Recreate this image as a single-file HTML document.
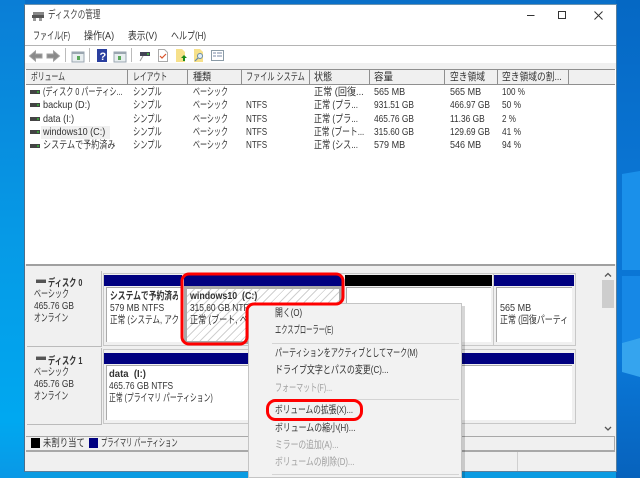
<!DOCTYPE html>
<html lang="ja"><head><meta charset="utf-8">
<style>
html,body{margin:0;padding:0}
body{width:640px;height:478px;overflow:hidden;position:relative;background:#0a9be2;font-family:"Liberation Sans","Noto Sans CJK JP",sans-serif;font-size:10.5px;color:#333;filter:blur(.3px)}
.a{position:absolute}
.t{position:absolute;white-space:nowrap;line-height:13px;height:13px;transform-origin:0 0;transform:scaleX(calc(var(--s,1)*.905))}
.k{--s:.74}
.n{--s:.88}
.d{color:#a0a0a0}
.clip{overflow:hidden}
.p{box-sizing:border-box;background:#fff;border-left:1px solid #aaa;border-top:1px solid #aaa}
svg{position:absolute;left:0;top:0}
</style></head><body>
<div class="a" style="left:0;top:0;width:640px;height:478px;background:linear-gradient(180deg,#0a6fc8 0,#0a7fd6 12%,#0a9be2 100%)"></div>
<div class="a" style="left:616px;top:0;width:24px;height:478px;background:linear-gradient(180deg,#0568c4 0,#0a74d2 35%,#0a78d8 75%,#0762bc 100%)"></div>
<div class="a" style="left:0;top:0;width:25px;height:478px;background:linear-gradient(180deg,#0a7ed6 0,#069ae6 50%,#00a8f0 88%,#0a98e6 100%)"></div>
<svg width="640" height="478" viewBox="0 0 640 478">
<polygon points="622,174 640,171 640,270 622,270" fill="#1a90ea"/>
<polygon points="622,276 640,276 640,338 622,343" fill="#1688e6"/>
<polygon points="622,343 640,338 640,377 622,372" fill="#35a4ee"/>
</svg>
<!-- window -->
<div class="a" style="left:24px;top:4px;width:593px;height:468px;background:#fff;border-right:1px solid #5a7f9c;border-left:1px solid #4a6f8c;border-top:1px solid #6a93b0;border-bottom:1px solid #5a7f9c;box-sizing:border-box"></div>
<!-- title -->
<div class="t" style="left:48px;top:9px;font-size:11px;color:#444;--s:.76">ディスクの管理</div>
<svg width="640" height="60" viewBox="0 0 640 60">
<rect x="32" y="15" width="12" height="3" fill="#555"/>
<rect x="33" y="12" width="11" height="3" fill="#888"/>
<rect x="33" y="18" width="3" height="3" fill="#999"/>
<rect x="39" y="18" width="3" height="3" fill="#999"/>
<path d="M527 15.5h7.5" stroke="#333" stroke-width="1"/>
<rect x="558.5" y="11.5" width="7" height="7" fill="none" stroke="#333" stroke-width="1"/>
<path d="M594.5 11.5l8 8M602.5 11.5l-8 8" stroke="#333" stroke-width="1"/>
</svg>
<!-- menu -->
<div class="t k" style="left:33px;top:30px">ファイル(F)</div>
<div class="t" style="left:84px;top:30px;--s:.95">操作(A)</div>
<div class="t" style="left:128px;top:30px;--s:.92">表示(V)</div>
<div class="t" style="left:171px;top:30px;--s:.84">ヘルプ(H)</div>
<div class="a" style="left:25px;top:45px;width:591px;height:1px;background:#b4b4b4"></div>
<!-- toolbar -->
<svg width="640" height="70" viewBox="0 0 640 70">
<path d="M29.500 56l6-5v3h6.500v4h-6.500v3z" fill="#8a8a8a" stroke="#a0a0a0" stroke-width="1"/>
<path d="M59.500 56l-6-5v3h-6.500v4h6.500v3z" fill="#8a8a8a" stroke="#a0a0a0" stroke-width="1"/>
<rect x="65" y="48" width="1" height="14" fill="#bbb"/>
<rect x="72" y="52" width="12" height="10" fill="#e8eef0" stroke="#9aa6b0"/>
<rect x="72" y="52" width="12" height="2" fill="#9aa6b0"/>
<rect x="77" y="56" width="3" height="4" fill="#5aa85a"/>
<rect x="89" y="48" width="1" height="14" fill="#bbb"/>
<rect x="97" y="49" width="10" height="13" fill="#2a3f9f"/>
<text x="99.5" y="60" font-family="Liberation Sans" font-size="11" font-weight="bold" fill="#fff">?</text>
<rect x="114" y="52" width="12" height="10" fill="#e8eef0" stroke="#9aa6b0"/>
<rect x="114" y="52" width="12" height="2" fill="#9aa6b0"/>
<rect x="118" y="56" width="3" height="4" fill="#5aa85a"/>
<rect x="131" y="48" width="1" height="14" fill="#bbb"/>
<path d="M140 61l3-5" stroke="#999" stroke-width="1"/>
<rect x="140" y="52" width="10" height="4" fill="#445"/>
<rect x="147" y="53" width="2" height="2" fill="#4a4"/>
<path d="M158.500 49.500h6l3 3v9h-9z" fill="#fff" stroke="#aaa"/>
<path d="M160 56l2 2 4-4" fill="none" stroke="#d9532a" stroke-width="1.200"/>
<path d="M176 49h6l3 3v10h-9z" fill="#f6e08a"/>
<path d="M183 61v-3h-2l3-3 3 3h-2v3z" fill="#1a8a1a"/>
<path d="M194 49h6l3 3v10h-9z" fill="#f6e08a"/>
<circle cx="200" cy="56" r="2.500" fill="#dfeef8" stroke="#6a8aa6"/>
<path d="M198 58l-3 3" stroke="#6a8aa6" stroke-width="1.200"/>
<rect x="211.500" y="50.500" width="12" height="10" fill="#fff" stroke="#8a9aa6"/>
<path d="M213 53h3M213 56h3M217 53h5M217 56h5" stroke="#7a8aa6"/>
</svg>
<div class="a" style="left:25px;top:63px;width:591px;height:6px;background:#f0f0f0"></div>
<div class="a" style="left:26px;top:69px;width:589px;height:1px;background:#8f8f8f"></div>
<!-- headers -->
<div class="a" style="left:26px;top:70px;width:589px;height:15px;background:#f0f0f0;border-bottom:1px solid #8f8f8f;box-sizing:border-box"></div>
<div class="a" style="left:127px;top:70px;width:1px;height:14px;background:#8f8f8f"></div>
<div class="a" style="left:187px;top:70px;width:1px;height:14px;background:#8f8f8f"></div>
<div class="a" style="left:241px;top:70px;width:1px;height:14px;background:#8f8f8f"></div>
<div class="a" style="left:309px;top:70px;width:1px;height:14px;background:#8f8f8f"></div>
<div class="a" style="left:369px;top:70px;width:1px;height:14px;background:#8f8f8f"></div>
<div class="a" style="left:444px;top:70px;width:1px;height:14px;background:#8f8f8f"></div>
<div class="a" style="left:497px;top:70px;width:1px;height:14px;background:#8f8f8f"></div>
<div class="a" style="left:568px;top:70px;width:1px;height:14px;background:#8f8f8f"></div>
<div class="t" style="left:31px;top:71px;--s:.72">ボリューム</div>
<div class="t" style="left:133px;top:71px;--s:.72">レイアウト</div>
<div class="t" style="left:193px;top:71px;--s:.95">種類</div>
<div class="t" style="left:246px;top:71px;--s:.75">ファイル システム</div>
<div class="t" style="left:314px;top:71px;--s:.95">状態</div>
<div class="t" style="left:374px;top:71px">容量</div>
<div class="t" style="left:450px;top:71px;--s:.92">空き領域</div>
<div class="t" style="left:502px;top:71px;--s:.92">空き領域の割...</div>
<!-- row icons -->
<svg width="640" height="160" viewBox="0 0 640 160">
<g fill="#444"><rect x="30" y="90" width="10" height="4"/><rect x="30" y="103" width="10" height="4"/><rect x="30" y="117" width="10" height="4"/><rect x="30" y="130" width="10" height="4"/><rect x="30" y="144" width="10" height="4"/></g>
<g fill="#3a9a3a"><rect x="37" y="91" width="2" height="2"/><rect x="37" y="104" width="2" height="2"/><rect x="37" y="118" width="2" height="2"/><rect x="37" y="131" width="2" height="2"/><rect x="37" y="145" width="2" height="2"/></g>
</svg>
<div class="a" style="left:41px;top:126px;width:69px;height:13px;background:#f0f0f0"></div>
<!-- rows -->
<div class="t" style="left:43px;top:86px;--s:.75">(ディスク 0 パーティシ...</div>
<div class="t" style="left:43px;top:99px;--s:.96">backup (D:)</div>
<div class="t" style="left:43px;top:113px;--s:.95">data (I:)</div>
<div class="t" style="left:43px;top:126px;--s:.95">windows10 (C:)</div>
<div class="t" style="left:43px;top:139px;--s:.85">システムで予約済み</div>
<div class="t" style="left:133px;top:86px;--s:.76">シンプル</div><div class="t" style="left:133px;top:99px;--s:.76">シンプル</div><div class="t" style="left:133px;top:113px;--s:.76">シンプル</div><div class="t" style="left:133px;top:126px;--s:.76">シンプル</div><div class="t" style="left:133px;top:139px;--s:.76">シンプル</div>
<div class="t k" style="left:193px;top:86px">ベーシック</div><div class="t k" style="left:193px;top:99px">ベーシック</div><div class="t k" style="left:193px;top:113px">ベーシック</div><div class="t k" style="left:193px;top:126px">ベーシック</div><div class="t k" style="left:193px;top:139px">ベーシック</div>
<div class="t" style="left:246px;top:99px;--s:.85">NTFS</div><div class="t" style="left:246px;top:113px;--s:.85">NTFS</div><div class="t" style="left:246px;top:126px;--s:.85">NTFS</div><div class="t" style="left:246px;top:139px;--s:.85">NTFS</div>
<div class="t" style="left:314px;top:86px;--s:.96">正常 (回復...</div><div class="t" style="left:314px;top:99px;--s:.85">正常 (プラ...</div><div class="t" style="left:314px;top:113px;--s:.85">正常 (プラ...</div><div class="t" style="left:314px;top:126px;--s:.82">正常 (ブート...</div><div class="t" style="left:314px;top:139px;--s:.85">正常 (シス...</div>
<div class="t" style="left:374px;top:86px;--s:.95">565 MB</div><div class="t n" style="left:374px;top:99px">931.51 GB</div><div class="t n" style="left:374px;top:113px">465.76 GB</div><div class="t n" style="left:374px;top:126px">315.60 GB</div><div class="t" style="left:374px;top:139px;--s:.95">579 MB</div>
<div class="t" style="left:450px;top:86px;--s:.95">565 MB</div><div class="t n" style="left:450px;top:99px">466.97 GB</div><div class="t n" style="left:450px;top:113px">11.36 GB</div><div class="t n" style="left:450px;top:126px">129.69 GB</div><div class="t" style="left:450px;top:139px;--s:.95">546 MB</div>
<div class="t" style="left:502px;top:86px;--s:.85">100 %</div><div class="t n" style="left:502px;top:99px">50 %</div><div class="t" style="left:502px;top:113px;--s:.85">2 %</div><div class="t n" style="left:502px;top:126px">41 %</div><div class="t n" style="left:502px;top:139px">94 %</div>
<!-- lower pane -->
<div class="a" style="left:25px;top:264px;width:591px;height:207px;background:#f0f0f0"></div>
<div class="a" style="left:26px;top:264px;width:589px;height:2px;background:#a0a0a0"></div>
<div class="a" style="left:27px;top:271px;width:75px;height:76px;background:#f0f0f0;border-right:1px solid #bbb;border-bottom:1px solid #bbb;box-sizing:border-box"></div>
<div class="a" style="left:27px;top:348px;width:75px;height:77px;background:#f0f0f0;border-right:1px solid #bbb;border-bottom:1px solid #bbb;box-sizing:border-box"></div>
<div class="a" style="left:103px;top:273px;width:473px;height:73px;box-sizing:border-box;border:1px solid #c8c8c8"></div>
<div class="a" style="left:103px;top:349px;width:473px;height:75px;box-sizing:border-box;border:1px solid #c8c8c8"></div>
<svg width="640" height="478" viewBox="0 0 640 478">
<rect x="36" y="280" width="10" height="3" fill="#555"/><rect x="36" y="279" width="10" height="1" fill="#aaa"/>
<rect x="36" y="357" width="10" height="3" fill="#555"/><rect x="36" y="356" width="10" height="1" fill="#aaa"/>
</svg>
<div class="t" style="left:48px;top:277px;font-weight:bold;--s:.76">ディスク 0</div>
<div class="t k" style="left:34px;top:288px">ベーシック</div>
<div class="t n" style="left:34px;top:300px">465.76 GB</div>
<div class="t" style="left:34px;top:312px;--s:.72">オンライン</div>
<div class="t" style="left:48px;top:355px;font-weight:bold;--s:.76">ディスク 1</div>
<div class="t k" style="left:34px;top:366px">ベーシック</div>
<div class="t n" style="left:34px;top:378px">465.76 GB</div>
<div class="t" style="left:34px;top:390px;--s:.72">オンライン</div>
<!-- disk 0 partitions -->
<div class="a" style="left:104px;top:275px;width:78px;height:11px;background:#000080"></div>
<div class="a" style="left:184px;top:275px;width:158px;height:11px;background:#000080"></div>
<div class="a" style="left:345px;top:275px;width:147px;height:11px;background:#000"></div>
<div class="a" style="left:494px;top:275px;width:80px;height:11px;background:#000080"></div>
<div class="a" style="left:493px;top:273px;width:1px;height:73px;background:#c8c8c8"></div>
<div class="a p" style="left:106px;top:287px;width:75px;height:55px"></div>
<div class="a" style="left:184px;top:286px;width:158px;height:58px;box-sizing:border-box;border:3px solid #a8a8a8;background:repeating-linear-gradient(135deg,#fff 0,#fff 4.800px,#d0d0d0 4.800px,#d0d0d0 5.800px)"></div>
<div class="a p" style="left:346px;top:287px;width:145px;height:55px"></div>
<div class="a p" style="left:496px;top:287px;width:76px;height:55px"></div>
<div class="a clip" style="left:110px;top:290px;width:68px;height:50px">
<div class="t" style="left:0;top:0;font-weight:bold;--s:.82">システムで予約済み</div>
<div class="t" style="left:0;top:12px;--s:.9">579 MB NTFS</div>
<div class="t" style="left:0;top:24px;--s:.8">正常 (システム, アクティブ</div>
</div>
<div class="t" style="left:190px;top:290px;font-weight:bold;--s:.93">windows10&nbsp; (C:)</div>
<div class="t n" style="left:190px;top:302px">315.60 GB NTFS</div>
<div class="t" style="left:190px;top:314px;--s:.85">正常 (ブート, ペ</div>
<div class="t" style="left:500px;top:302px;--s:.95">565 MB</div>
<div class="t" style="left:500px;top:314px;--s:.84">正常 (回復パーティ</div>
<!-- disk 1 -->
<div class="a" style="left:104px;top:353px;width:470px;height:11px;background:#000080"></div>
<div class="a p" style="left:106px;top:365px;width:466px;height:55px"></div>
<div class="t" style="left:109px;top:368px;font-weight:bold">data&nbsp; (I:)</div>
<div class="t n" style="left:109px;top:380px">465.76 GB NTFS</div>
<div class="t" style="left:109px;top:392px;--s:.72">正常 (プライマリ パーティション)</div>
<!-- scrollbar -->
<div class="a" style="left:602px;top:280px;width:12px;height:28px;background:#cdcdcd"></div>
<svg width="640" height="478" viewBox="0 0 640 478"><path d="M605 276.500l3-3 3 3M605 427l3 3 3-3" fill="none" stroke="#555" stroke-width="1.300"/></svg>
<!-- legend -->
<div class="a" style="left:26px;top:436px;width:589px;height:1px;background:#a8a8a8"></div>
<div class="a" style="left:26px;top:450px;width:589px;height:2px;background:#a8a8a8"></div>
<div class="a" style="left:614px;top:436px;width:1px;height:15px;background:#a8a8a8"></div>
<div class="a" style="left:31px;top:438px;width:9px;height:10px;background:#000"></div>
<div class="t" style="left:43px;top:437px;--s:.88">未割り当て</div>
<div class="a" style="left:89px;top:438px;width:9px;height:10px;background:#000080"></div>
<div class="t" style="left:101px;top:437px;--s:.66">プライマリ パーティション</div>
<div class="a" style="left:517px;top:452px;width:1px;height:19px;background:#d0d0d0"></div>
<!-- context menu -->
<div class="a" style="left:251px;top:306px;width:214px;height:172px;background:#000;opacity:.16"></div>
<div class="a" style="left:248px;top:303px;width:214px;height:175px;background:#f2f2f2;border:1px solid #c4c4c4;box-sizing:border-box"></div>
<div class="t" style="left:275px;top:307px;--s:.83">開く(O)</div>
<div class="t" style="left:275px;top:324px;--s:.66">エクスプローラー(E)</div>
<div class="a" style="left:272px;top:343px;width:187px;height:1px;background:#d4d4d4"></div>
<div class="t" style="left:275px;top:347px;--s:.74">パーティションをアクティブとしてマーク(M)</div>
<div class="t" style="left:275px;top:364px;--s:.84">ドライブ文字とパスの変更(C)...</div>
<div class="t d k" style="left:275px;top:382px">フォーマット(F)...</div>
<div class="a" style="left:272px;top:399px;width:187px;height:1px;background:#d4d4d4"></div>
<div class="t" style="left:275px;top:404px;--s:.81">ボリュームの拡張(X)...</div>
<div class="t" style="left:275px;top:422px;--s:.83">ボリュームの縮小(H)...</div>
<div class="t d" style="left:275px;top:439px;--s:.82">ミラーの追加(A)...</div>
<div class="t d" style="left:275px;top:456px;--s:.82">ボリュームの削除(D)...</div>
<div class="a" style="left:272px;top:474px;width:187px;height:1px;background:#d4d4d4"></div>
<!-- red outlines -->
<svg width="640" height="478" viewBox="0 0 640 478">
<path d="M189 274H336a7 7 0 0 1 7 7V297a7 7 0 0 1-7 7H254a7 7 0 0 0-7 7V337a7 7 0 0 1-7 7H189a7 7 0 0 1-7-7V281a7 7 0 0 1 7-7Z" fill="none" stroke="#f00" stroke-width="3"/>
<rect x="267.500" y="400.500" width="94" height="19" rx="8" fill="none" stroke="#f00" stroke-width="3"/>
</svg>
</body></html>
